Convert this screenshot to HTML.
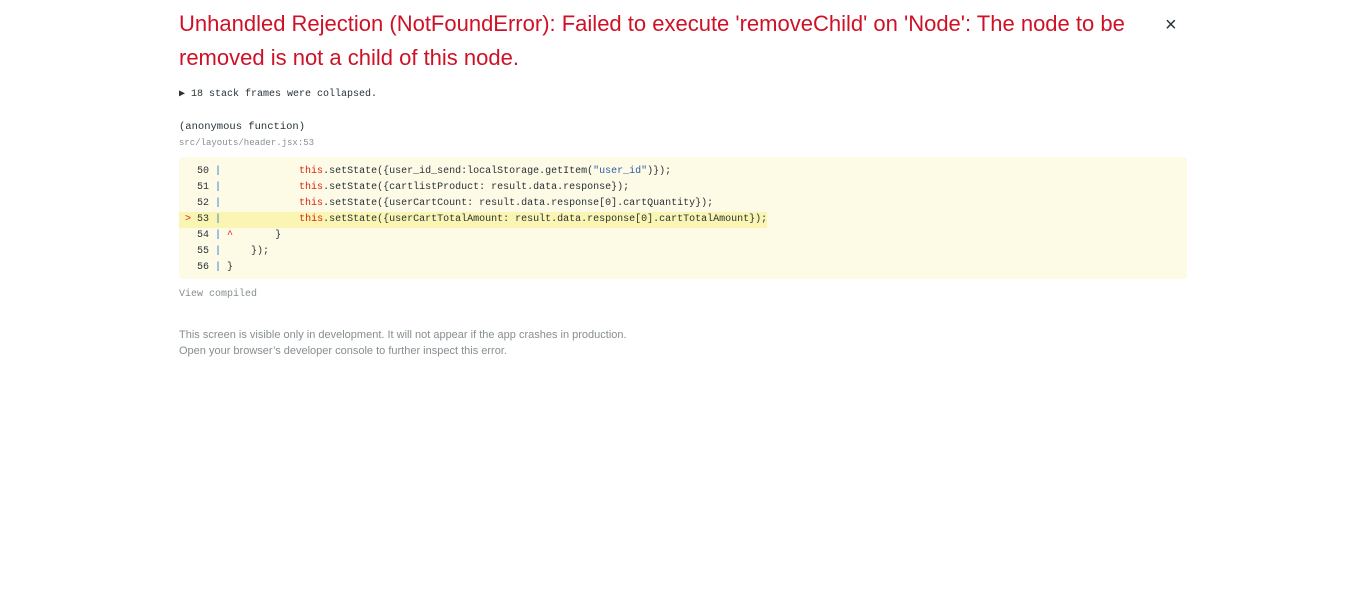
<!DOCTYPE html>
<html><head><meta charset="utf-8"><style>
body{margin:0;background:#fff;width:1366px;height:613px;overflow:hidden;font-family:"Liberation Sans",Arial,sans-serif}
.c{position:absolute;left:179px;width:1008px;top:2px}
h1{margin:0;position:absolute;top:5px;left:0;width:980px;font-size:22px;font-weight:normal;line-height:34px;color:#ce1126}
.x{position:absolute;left:986px;top:12px;font-size:20px;color:#293238}
.mono{font-family:"Liberation Mono","DejaVu Sans Mono",monospace;font-size:10px}
.col{position:absolute;top:86px;left:0;color:#293238}
.fn{position:absolute;top:119px;left:0;color:#293238;font-size:10.5px}
.file{position:absolute;top:136px;left:0;color:#878e91;font-size:9px}
pre{position:absolute;margin:0;top:155px;left:0;width:1008px;height:122px;background:#fdfae6;border-radius:3px;padding-top:7px;box-sizing:border-box;line-height:16px;color:#293238}
.l{display:block;height:16px;white-space:pre}
.hl{background:#fbf5b4;display:inline-block}
.r{color:#d21}.b{color:#1a6fd0}.s{color:#2e5ca8}
.v{position:absolute;top:287px;left:0;color:#878e91}
.f{position:absolute;top:325px;left:0;font-size:11px;line-height:16px;color:#878e91}
</style></head><body><div class="c">
<h1>Unhandled Rejection (NotFoundError): Failed to execute 'removeChild' on 'Node': The node to be removed is not a child of this node.</h1>
<div class="x">×</div>
<div class="col mono">▶ 18 stack frames were collapsed.</div>
<div class="fn mono">(anonymous function)</div>
<div class="file mono">src/layouts/header.jsx:53</div>
<pre class="mono"><span class="l">   50 <span class="b">|</span>             <span class="r">this</span>.setState({user_id_send:localStorage.getItem(<span class="s">"user_id"</span>)});</span><span class="l">   51 <span class="b">|</span>             <span class="r">this</span>.setState({cartlistProduct: result.data.response});</span><span class="l">   52 <span class="b">|</span>             <span class="r">this</span>.setState({userCartCount: result.data.response[0].cartQuantity});</span><span class="l"><span class="hl"> <span class="r">&gt;</span> 53 <span class="b">|</span>             <span class="r">this</span>.setState({userCartTotalAmount: result.data.response[0].cartTotalAmount});</span></span><span class="l">   54 <span class="b">|</span> <span class="r">^</span>       }</span><span class="l">   55 <span class="b">|</span>     });</span><span class="l">   56 <span class="b">|</span> }</span></pre>
<div class="v mono">View compiled</div>
<div class="f">This screen is visible only in development. It will not appear if the app crashes in production.<br>Open your browser’s developer console to further inspect this error.</div>
</div></body></html>
